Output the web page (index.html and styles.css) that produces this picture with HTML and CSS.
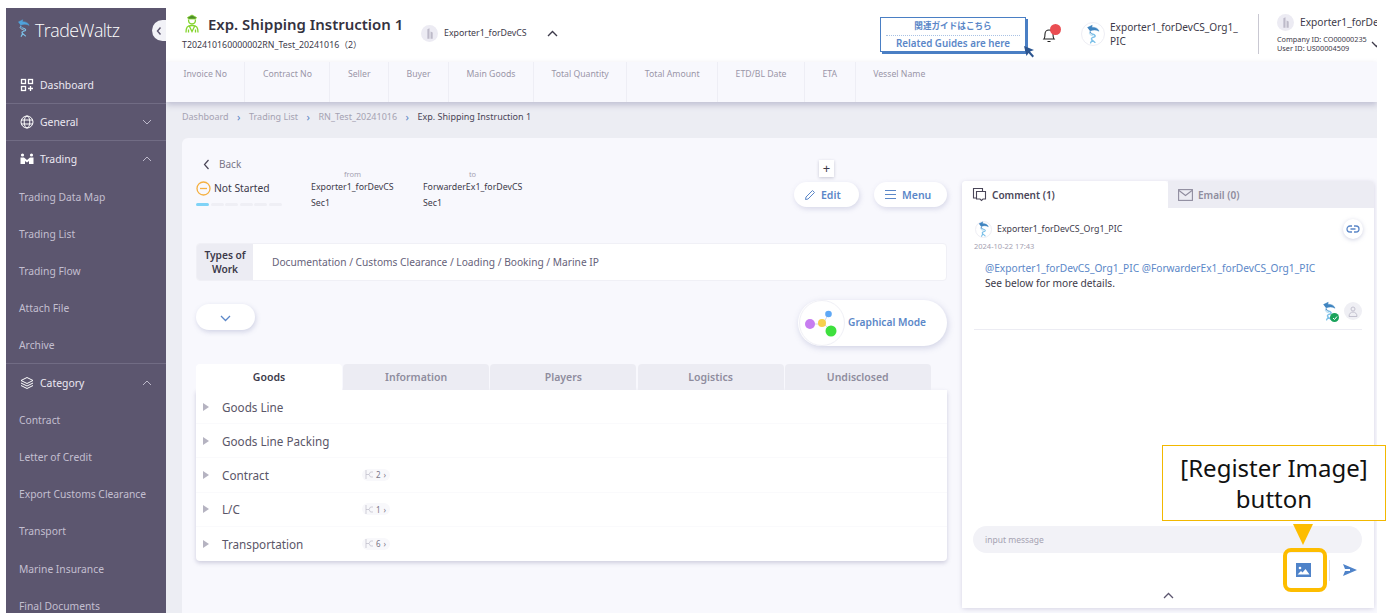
FILE: index.html
```html
<!DOCTYPE html>
<html lang="en">
<head>
    <meta charset="UTF-8">
    <title>Exp. Shipping Instruction 1</title>
    <link rel="stylesheet" href="styles.css">
</head>
<body>

    <svg class="defs" width="0" height="0">
        <symbol id="swirl" viewBox="0 0 20 24">
            <path d="M3 4 9 1 8.500 3.500C13 3.500 16.500 5 17.500 8.500 14 6.500 10 6.500 7 8 5 9.500 6 11 9 12" fill="currentColor" stroke="currentColor" stroke-width=".6" stroke-linejoin="round"/>
            <path d="M9 12C13 13 14 15 11 16 8 17 7 18 9 19.500L12.500 22.500M9 19.500 7 23" fill="none" stroke="#7cc0e8" stroke-width="1.700" stroke-linecap="round"/>
            <path d="M6 10C4 13 9 13.500 10.500 15" fill="none" stroke="#a6d6f0" stroke-width="1.200"/>
        </symbol>
        <symbol id="office" viewBox="0 0 16 16">
            <circle cx="8" cy="8" r="8" fill="#ecebf3"/>
            <path d="M6 13V4l2-1v10zM9 13V6l2 1v6z" fill="#bdbac9"/>
        </symbol>
        <symbol id="branch" viewBox="0 0 8 9">
            <path d="M1 0v9M1 4.500h3l1.500-2.500H8M4 4.500l1.500 2.500H8" fill="none" stroke="#bdbbc8" stroke-width=".7"/>
        </symbol>
    </svg>

    <div class="app">
        <nav class="sidebar">
            <div class="logo">
                <svg class="logo-mark" width="15" height="20"><use href="#swirl"/></svg>
                <span>TradeWaltz</span>
                <div class="collapse-btn">
                    <svg width="8" height="10" viewBox="0 0 8 10"><path d="M5.500 1.500 2.500 5l3 3.500" fill="none" stroke="#5c566f" stroke-width="1.400"/></svg>
                </div>
            </div>

            <div class="nav-head">
                <svg width="14" height="14" viewBox="0 0 14 14" fill="none" stroke="#fff" stroke-width="1.300"><rect x="1.500" y="1.500" width="4" height="4"/><rect x="8.500" y="1.500" width="4" height="4"/><rect x="1.500" y="8.500" width="4" height="4"/><path d="M10.500 8v5M8 10.500h5"/></svg>
                <span>Dashboard</span>
            </div>
            <div class="nav-head">
                <svg width="14" height="14" viewBox="0 0 14 14" fill="none" stroke="#fff" stroke-width="1"><circle cx="7" cy="7" r="6"/><ellipse cx="7" cy="7" rx="2.800" ry="6"/><path d="M1 5h12M1 9h12"/></svg>
                <span>General</span>
                <svg class="caret" width="10" height="6" viewBox="0 0 10 6"><path d="M1 1l4 4 4-4" fill="none" stroke="#bdb9cb" stroke-width="1"/></svg>
            </div>
            <div class="nav-head open">
                <svg width="14" height="14" viewBox="0 0 14 14" fill="#fff"><circle cx="2.500" cy="3" r="1.600"/><circle cx="11.500" cy="3" r="1.600"/><path d="M.5 5.500H4l3 2.500 3-2.500h3.500V12H9V9L7 10.500 5 9v3H.5z"/></svg>
                <span>Trading</span>
                <svg class="caret" width="10" height="6" viewBox="0 0 10 6"><path d="M1 5l4-4 4 4" fill="none" stroke="#bdb9cb" stroke-width="1"/></svg>
            </div>
            <a class="nav-sub">Trading Data Map</a>
            <a class="nav-sub">Trading List</a>
            <a class="nav-sub">Trading Flow</a>
            <a class="nav-sub">Attach File</a>
            <a class="nav-sub last">Archive</a>
            <div class="nav-head open">
                <svg width="14" height="14" viewBox="0 0 14 14" fill="none" stroke="#fff" stroke-width="1"><path d="M7 1.500 13 4.500 7 7.500 1 4.500zM1 7l6 3 6-3M1 9.500l6 3 6-3"/></svg>
                <span>Category</span>
                <svg class="caret" width="10" height="6" viewBox="0 0 10 6"><path d="M1 5l4-4 4 4" fill="none" stroke="#bdb9cb" stroke-width="1"/></svg>
            </div>
            <a class="nav-sub">Contract</a>
            <a class="nav-sub">Letter of Credit</a>
            <a class="nav-sub">Export Customs Clearance</a>
            <a class="nav-sub">Transport</a>
            <a class="nav-sub">Marine Insurance</a>
            <a class="nav-sub">Final Documents</a>
        </nav>

        <div class="main">
            <header class="topbar">
                <div class="title-block">
                    <div class="title-row">
                        <svg width="14" height="19" viewBox="0 0 14 19" fill="none" stroke="#84d42c" stroke-width="1.300"><path d="M2.500 3.500 7 1l4.500 2.500-1 1.500h-7z" fill="#4f8f2c" stroke="#84d42c" stroke-width=".8"/><path d="M3.500 5.500c0 6 7 6 7 0"/><path d="M1 18.500c0-5 1-7 6-7s6 2 6 7M4 11.500l3 6 3-6M3.500 18.500v-3M10.500 18.500v-3"/></svg>
                        <h1>Exp. Shipping Instruction 1</h1>
                    </div>
                    <div class="trade-id">T202410160000002RN_Test_20241016（2）</div>
                </div>
                <div class="company">
                    <svg width="17" height="17"><use href="#office"/></svg>
                    <span>Exporter1_forDevCS</span>
                    <svg class="company-caret" width="11" height="7" viewBox="0 0 11 7"><path d="M1 6l4.500-4.500L10 6" fill="none" stroke="#3d3a4a" stroke-width="1.400"/></svg>
                </div>
                <div class="guide">
                    <div class="guide-jp">関連ガイドはこちら</div>
                    <div class="guide-en">Related Guides are here</div>
                    <svg class="guide-cursor" width="12" height="13" viewBox="0 0 12 13"><path d="M1 1l10 4-4 1.500 4 4.500-1.500 1.500-4-4.500L3.500 11z" fill="#2c5590"/></svg>
                </div>
                <div class="bell">
                    <svg width="14" height="16" viewBox="0 0 14 16" fill="none" stroke="#222" stroke-width="1.100"><path d="M2 12c1-1 1-3 1-5 0-2.500 1.800-4 4-4s4 1.500 4 4c0 2 0 4 1 5zM5.500 14.500h3"/></svg>
                    <i class="bell-dot"></i>
                </div>
                <div class="me">
                    <div class="avatar-ring">
                        <svg class="avatar" width="16" height="20"><use href="#swirl"/></svg>
                    </div>
                    <div class="me-name">Exporter1_forDevCS_Org1_<br>PIC</div>
                </div>
                <div class="account">
                    <div class="account-name">
                        <svg width="17" height="17"><use href="#office"/></svg>
                        <span>Exporter1_forDevCS</span>
                    </div>
                    <div class="account-id">Company ID: CO00000235</div>
                    <div class="account-id">User ID: US00004509</div>
                    <svg class="account-caret" width="11" height="7" viewBox="0 0 11 7"><path d="M1 1l4.500 4.500L10 1" fill="none" stroke="#3d3a4a" stroke-width="1.300"/></svg>
                </div>
            </header>

            <div class="summary">
                <div class="summary-cell">Invoice No</div>
                <div class="summary-cell">Contract No</div>
                <div class="summary-cell">Seller</div>
                <div class="summary-cell">Buyer</div>
                <div class="summary-cell">Main Goods</div>
                <div class="summary-cell">Total Quantity</div>
                <div class="summary-cell">Total Amount</div>
                <div class="summary-cell">ETD/BL Date</div>
                <div class="summary-cell">ETA</div>
                <div class="summary-cell">Vessel Name</div>
            </div>

            <div class="content">
                <div class="crumbs">
                    <span>Dashboard</span><b>›</b>
                    <span>Trading List</span><b>›</b>
                    <span>RN_Test_20241016</span><b>›</b>
                    <span class="here">Exp. Shipping Instruction 1</span>
                </div>

                <div class="card">
                    <section class="work">
                        <div class="work-head">
                            <div class="status-block">
                                <div class="back">
                                    <svg width="7" height="11" viewBox="0 0 7 11"><path d="M5.500 1 1.500 5.500l4 4.500" fill="none" stroke="#4a4658" stroke-width="1.200"/></svg>
                                    <span>Back</span>
                                </div>
                                <div class="status">
                                    <svg width="15" height="15" viewBox="0 0 15 15" fill="none" stroke="#f5b041" stroke-width="1.300"><circle cx="7.500" cy="7.500" r="6.500"/><path d="M4 7.500h7"/></svg>
                                    <span>Not Started</span>
                                </div>
                                <div class="progress">
                                    <i class="done"></i><i></i><i></i><i></i><i></i><i></i>
                                </div>
                            </div>
                            <div class="party from">
                                <small>from</small>
                                <div>Exporter1_forDevCS</div>
                                <div>Sec1</div>
                            </div>
                            <div class="party to">
                                <small>to</small>
                                <div>ForwarderEx1_forDevCS</div>
                                <div>Sec1</div>
                            </div>
                            <div class="actions">
                                <div class="plus">+</div>
                                <button class="pill edit">
                                    <svg width="12" height="12" viewBox="0 0 12 12" fill="none" stroke="#5b87c8" stroke-width="1"><path d="M1.500 10.500 2 8 8.500 1.500l2 2L4 10z"/></svg>
                                    Edit
                                </button>
                                <button class="pill menu">
                                    <svg width="13" height="11" viewBox="0 0 13 11" stroke="#5b87c8" stroke-width="1.100"><path d="M1 1.500h11M1 5.500h11M1 9.500h11"/></svg>
                                    Menu
                                </button>
                            </div>
                        </div>

                        <div class="types">
                            <div class="types-label">Types of Work</div>
                            <div class="types-value">Documentation / Customs Clearance / Loading / Booking / Marine IP</div>
                        </div>

                        <div class="mode-row">
                            <button class="expand">
                                <svg width="11" height="7" viewBox="0 0 11 7"><path d="M1 1l4.500 4.500L10 1" fill="none" stroke="#5b87c8" stroke-width="1.300"/></svg>
                            </button>
                            <button class="graph-btn">
                                <span class="graph-icon">
                                    <svg width="44" height="44" viewBox="0 0 44 44">
                                        <path d="M10 23h13l6-11M23 22l8 8" stroke="#d8d8e4" stroke-width="1" fill="none"/>
                                        <circle cx="10" cy="23" r="5" fill="#c77df0"/>
                                        <circle cx="22" cy="22" r="4" fill="#f7d04e"/>
                                        <circle cx="28.500" cy="13" r="3.300" fill="#5fa8f5"/>
                                        <circle cx="31" cy="30" r="5.500" fill="#3ee03e"/>
                                    </svg>
                                </span>
                                Graphical Mode
                            </button>
                        </div>

                        <div class="tabs">
                            <div class="tab active">Goods</div>
                            <div class="tab">Information</div>
                            <div class="tab">Players</div>
                            <div class="tab">Logistics</div>
                            <div class="tab">Undisclosed</div>
                        </div>
                        <div class="tree">
                            <div class="tree-row"><i class="arrow"></i><span class="tree-name">Goods Line</span></div>
                            <div class="tree-row"><i class="arrow"></i><span class="tree-name">Goods Line Packing</span></div>
                            <div class="tree-row"><i class="arrow"></i><span class="tree-name">Contract</span><span class="count"><svg width="8" height="9"><use href="#branch"/></svg>2<u>›</u></span></div>
                            <div class="tree-row"><i class="arrow"></i><span class="tree-name">L/C</span><span class="count"><svg width="8" height="9"><use href="#branch"/></svg>1<u>›</u></span></div>
                            <div class="tree-row"><i class="arrow"></i><span class="tree-name">Transportation</span><span class="count"><svg width="8" height="9"><use href="#branch"/></svg>6<u>›</u></span></div>
                        </div>
                    </section>

                    <aside class="talk">
                        <div class="talk-tabs">
                            <div class="talk-tab active">
                                <svg width="15" height="15" viewBox="0 0 15 15" fill="none" stroke="#4a4658" stroke-width="1.100"><path d="M4 11H1.500V1.500h9V4"/><path d="M4.500 4.500h9v7.500H11l-1.500 1.500L8 12H4.500z"/></svg>
                                Comment (1)
                            </div>
                            <div class="talk-tab">
                                <svg width="15" height="12" viewBox="0 0 15 12" fill="none" stroke="#8f8c9e" stroke-width="1.100"><rect x=".6" y=".6" width="13.800" height="10.800"/><path d="M1 1.500l6.500 5 6.500-5"/></svg>
                                Email (0)
                            </div>
                        </div>
                        <div class="talk-body">
                            <div class="comment">
                                <div class="comment-head">
                                    <div class="avatar-ring small">
                                        <svg class="avatar" width="13" height="16"><use href="#swirl"/></svg>
                                    </div>
                                    <span>Exporter1_forDevCS_Org1_PIC</span>
                                    <div class="link-btn">
                                        <svg width="14" height="8" viewBox="0 0 14 8" fill="none" stroke="#5b87c8" stroke-width="1.300"><path d="M6 1H4a3 3 0 0 0 0 6h2M8 1h2a3 3 0 0 1 0 6H8M4.500 4h5"/></svg>
                                    </div>
                                </div>
                                <div class="comment-date">2024-10-22 17:43</div>
                                <div class="comment-text">
                                    <span class="mention">@Exporter1_forDevCS_Org1_PIC @ForwarderEx1_forDevCS_Org1_PIC</span><br>
                                    See below for more details.
                                </div>
                                <div class="readers">
                                    <div class="reader">
                                        <svg class="avatar" width="16" height="20"><use href="#swirl"/></svg>
                                        <i class="tick">
                                            <svg width="6" height="6" viewBox="0 0 6 6"><path d="M1 3l1.500 1.500L5 1.500" fill="none" stroke="#fff" stroke-width="1"/></svg>
                                        </i>
                                    </div>
                                    <div class="reader-off">
                                        <svg width="10" height="11" viewBox="0 0 10 11" fill="none" stroke="#c3c1cf" stroke-width="1"><circle cx="5" cy="3" r="2"/><path d="M1 10.500c0-6 8-6 8 0z"/></svg>
                                    </div>
                                </div>
                            </div>
                            <div class="composer">
                                <div class="message">input message</div>
                                <div class="composer-btns">
                                    <svg class="image-btn" width="15" height="14" viewBox="0 0 15 14"><rect width="15" height="14" fill="#4f83c9"/><circle cx="4" cy="5" r="1.300" fill="#fff"/><path d="M1.500 11.500 5 8l1.500 1.500L9.500 6l4 5.500z" fill="#fff"/></svg>
                                    <i class="btn-sep"></i>
                                    <svg width="14" height="12" viewBox="0 0 14 12"><path d="M0 0l14 6-14 6 2-5h5V5H2z" fill="#4f83c9"/></svg>
                                </div>
                                <svg class="fold" width="11" height="7" viewBox="0 0 11 7"><path d="M1 6l4.500-4.500L10 6" fill="none" stroke="#5c566f" stroke-width="1.300"/></svg>
                            </div>
                        </div>
                    </aside>
                </div>
            </div>
        </div>
    </div>

    <div class="note">[Register Image]<br>button</div>
    <div class="note-arrow"></div>
    <div class="note-ring"></div>

</body>
</html>
```

FILE: styles.css
```css
* {
    box-sizing: border-box;
}

body {
    margin: 0;
    width: 1390px;
    height: 616px;
    padding: 8px 13px 0 6px;
    overflow: hidden;
    position: relative;
    background: #fff;
    font-family: "Noto Sans", "Noto Sans CJK JP", sans-serif;
    color: #3d3a4a;
}

.defs {
    position: absolute;
}

.app {
    display: flex;
    height: 605px;
}

/* sidebar */
.sidebar {
    width: 160px;
    flex: none;
    background: #5c566f;
    color: #ece9f2;
    overflow: hidden;
}

.logo {
    height: 58.500px;
    display: flex;
    align-items: flex-start;
    padding: 10px 0 0 10px;
    position: relative;
    font-family: "Open Sans", sans-serif;
    font-weight: 300;
    font-size: 17.800px;
    line-height: 25px;
    letter-spacing: -0.5px;
    color: #fff;
    gap: 4px;
}

.logo-mark {
    color: #4fa3dc;
    flex: none;
}

.collapse-btn {
    position: absolute;
    right: 0;
    top: 12px;
    width: 14px;
    height: 21px;
    background: #f2f2f7;
    border-radius: 11px 0 0 11px;
    display: flex;
    align-items: center;
    justify-content: center;
}

.nav-head {
    height: 37.200px;
    display: flex;
    align-items: center;
    padding: 0 14px;
    font-size: 10.400px;
    border-bottom: 1px solid #716c84;
    gap: 6px;
}

.nav-head.open {
    border-bottom: 0;
}

.caret {
    margin-left: auto;
}

.nav-sub {
    height: 37.200px;
    display: flex;
    align-items: center;
    padding-left: 13px;
    font-size: 10.300px;
    color: #c3bfd0;
}

.nav-sub.last {
    border-bottom: 1px solid #716c84;
}

/* top */
.main {
    flex: 1;
    min-width: 0;
    display: flex;
    flex-direction: column;
    overflow: hidden;
}

.topbar {
    height: 54px;
    flex: none;
    background: #fff;
    display: flex;
    align-items: center;
    padding-left: 16px;
    position: relative;
}

.title-block {
    width: 239px;
    flex: none;
    margin-top: -6px;
}

.title-row {
    display: flex;
    align-items: center;
    gap: 9px;
    padding-left: 3px;
}

.title-row h1 {
    margin: 0;
    font-size: 14.950px;
    font-weight: 600;
    line-height: 20px;
    color: #35323f;
    white-space: nowrap;
}

.trade-id {
    font-size: 8.800px;
    margin-top: 4px;
    white-space: nowrap;
}

.company {
    display: flex;
    align-items: center;
    font-size: 8.800px;
    width: 459px;
    flex: none;
    margin-top: -4px;
    gap: 6px;
}

.company-caret {
    margin-left: 14px;
}

.guide {
    width: 146px;
    height: 35px;
    flex: none;
    margin-top: -2px;
    border: 1.500px solid #4a7fc4;
    box-shadow: 2px 2px 0 #4a7fc4;
    text-align: center;
    font-size: 9.800px;
    font-weight: 600;
    color: #5b87c8;
    position: relative;
}

.guide-jp {
    font-size: 8.600px;
    line-height: 17px;
    border-bottom: 1px dotted #a9c2e4;
    margin: 0 5px;
}

.guide-en {
    line-height: 16px;
}

.guide-cursor {
    position: absolute;
    right: -10px;
    bottom: -7px;
}

.bell {
    position: relative;
    width: 14px;
    margin-left: 16px;
    height: 16px;
    margin-top: -2px;
    flex: none;
}

.bell-dot {
    position: absolute;
    left: 8px;
    top: -2px;
    width: 11px;
    height: 11px;
    border-radius: 50%;
    background: #ea4d52;
}

.me {
    display: flex;
    align-items: center;
    margin-left: 25px;
    width: 177px;
    flex: none;
    font-size: 10.100px;
    line-height: 14px;
    gap: 5px;
    margin-top: -2px;
}

.avatar-ring {
    width: 24px;
    height: 24px;
    border-radius: 50%;
    border: 1px solid #eeeef4;
    display: flex;
    align-items: center;
    justify-content: center;
    flex: none;
}

.avatar-ring.small {
    width: 17px;
    height: 17px;
}

.avatar {
    color: #3f84c0;
    flex: none;
}

.account {
    border-left: 1px solid #c9c8d2;
    height: 40px;
    padding-left: 18px;
    flex: none;
    width: 240px;
    margin-top: -3px;
    position: relative;
    white-space: nowrap;
}

.account-name {
    display: flex;
    align-items: center;
    gap: 6px;
    font-size: 10.200px;
    height: 17px;
    margin-bottom: 4px;
}

.account-id {
    font-size: 7.300px;
    line-height: 9.500px;
}

.account-caret {
    position: absolute;
    left: 112px;
    top: 27px;
}

.summary {
    height: 40px;
    flex: none;
    background: #f8f8fd;
    display: flex;
    box-shadow: 0 3px 6px rgba(110, 105, 150, 0.35);
    position: relative;
}

.summary-cell {
    padding: 6px 17.500px 0;
    font-size: 8.700px;
    color: #9a96a8;
    border-right: 1px solid #eeeef5;
    white-space: nowrap;
}

.summary-cell:last-child {
    border-right: 0;
}

/* content */
.content {
    flex: 1;
    min-height: 0;
    background: #ecedf3;
    padding: 8px 0 0 16px;
}

.crumbs {
    font-size: 9px;
    color: #a5a2b2;
    display: flex;
    gap: 8.500px;
    height: 14px;
    line-height: 14px;
}

.crumbs b {
    color: #5b87c8;
    font-size: 11px;
    font-weight: 400;
}

.crumbs .here {
    color: #4a4658;
}

.card {
    margin-top: 14px;
    height: 480px;
    background: #f8f8fd;
    border-radius: 6px 0 0 0;
    display: flex;
    padding: 18px 0 0 14px;
}

.work {
    width: 751px;
    flex: none;
}

.work-head {
    display: flex;
    height: 87px;
    position: relative;
}

.status-block {
    width: 115px;
    flex: none;
}

.back {
    display: flex;
    align-items: center;
    gap: 9px;
    font-size: 10px;
    color: #7a7688;
    padding-left: 7px;
    height: 16px;
}

.status {
    display: flex;
    align-items: center;
    gap: 3px;
    font-size: 10.300px;
    margin-top: 8px;
    height: 16px;
}

.progress {
    display: flex;
    gap: 1.500px;
    margin-top: 7px;
    width: 86px;
}

.progress i {
    flex: 1;
    height: 3px;
    background: #efeff5;
    border-radius: 2px;
}

.progress i.done {
    background: #7fd3f7;
}

.party {
    font-size: 8.800px;
    line-height: 16px;
    padding-top: 14px;
    flex: none;
    white-space: nowrap;
}

.party small {
    display: block;
    font-size: 7.500px;
    line-height: 9px;
    color: #a5a2b2;
    text-align: center;
}

.party.from {
    width: 83px;
    margin-right: 29px;
}

.party.to {
    width: 99px;
}

.actions {
    margin-left: auto;
    display: flex;
    gap: 15px;
    align-items: flex-start;
    padding-top: 26px;
    position: relative;
}

.plus {
    position: absolute;
    left: 25px;
    top: 4px;
    width: 15px;
    height: 17px;
    background: #fff;
    text-align: center;
    font-size: 13px;
    line-height: 16px;
    box-shadow: 0 1px 3px rgba(90, 90, 120, 0.3);
}

.pill {
    height: 25px;
    border: 0;
    border-radius: 13px;
    background: #fff;
    box-shadow: 1px 2px 5px rgba(120, 125, 175, 0.25);
    padding: 0 0 0 10px;
    display: flex;
    align-items: center;
    gap: 5px;
    font-family: inherit;
    font-size: 10.500px;
    font-weight: 600;
    color: #5b87c8;
}

.pill.edit {
    width: 65px;
}

.pill.menu {
    width: 73px;
}

.types {
    display: flex;
    height: 38px;
    border-radius: 4px;
    background: #fff;
    overflow: hidden;
    border: 1px solid #f0f0f6;
}

.types-label {
    width: 56px;
    background: #ececf3;
    font-size: 10.200px;
    font-weight: 600;
    line-height: 14px;
    text-align: center;
    display: flex;
    align-items: center;
    justify-content: center;
}

.types-value {
    padding-left: 19px;
    font-size: 10.200px;
    color: #66627a;
    line-height: 36px;
}

.mode-row {
    display: flex;
    justify-content: space-between;
    margin-top: 19px;
    height: 64px;
}

.expand {
    margin-top: 4px;
    width: 59px;
    height: 26px;
    border: 0;
    border-radius: 13px;
    background: #fff;
    box-shadow: 1px 2px 5px rgba(120, 125, 175, 0.3);
}

.graph-btn {
    width: 149px;
    height: 46px;
    border: 0;
    border-radius: 23px;
    background: #fff;
    box-shadow: 1px 2px 6px rgba(120, 125, 175, 0.3);
    display: flex;
    align-items: center;
    padding: 0 0 3px 1px;
    gap: 3px;
    font-family: inherit;
    font-size: 10.200px;
    font-weight: 600;
    color: #5b87c8;
}

.graph-icon {
    display: flex;
    border-radius: 50%;
    border: 1px solid #f0f0f6;
    margin-top: 3px;
}

.tabs {
    display: flex;
    gap: 1px;
    height: 26px;
}

.tab {
    width: 146px;
    margin-right: .2px;
    background: #ececf3;
    border-radius: 4px 4px 0 0;
    text-align: center;
    font-size: 10.500px;
    font-weight: 600;
    line-height: 27px;
    color: #8f8c9e;
}

.tab.active {
    background: #fff;
    color: #3d3a4a;
}

.tree {
    background: #fff;
    height: 171px;
    border-radius: 0 0 4px 4px;
    box-shadow: 0 2px 4px rgba(110, 105, 150, 0.3);
}

.tree-row {
    height: 34.200px;
    display: flex;
    align-items: center;
    padding-left: 7px;
    border-bottom: 1px solid #fafafc;
}

.tree-row:last-child {
    border-bottom: 0;
}

.arrow {
    width: 0;
    height: 0;
    border-left: 6px solid #b5b3c1;
    border-top: 4px solid transparent;
    border-bottom: 4px solid transparent;
    margin-right: 13px;
    flex: none;
}

.tree-name {
    width: 140px;
    font-size: 11.700px;
    line-height: 16px;
    color: #5a5668;
}

.count {
    display: flex;
    align-items: center;
    gap: 3px;
    height: 12px;
    width: 28px;
    padding-left: 3px;
    background: #f8f8fb;
    border-radius: 6px;
    font-size: 8px;
    color: #7a7688;
}

.count u {
    text-decoration: none;
}

/* comment panel */
.talk {
    margin-left: 15px;
    margin-top: 25px;
    width: 412px;
    height: 427px;
    flex: none;
    display: flex;
    flex-direction: column;
    box-shadow: 0 1px 4px rgba(110, 105, 150, 0.25);
    border-radius: 4px;
}

.talk-tabs {
    display: flex;
    height: 27px;
    flex: none;
}

.talk-tab {
    flex: 1;
    display: flex;
    align-items: center;
    gap: 5px;
    padding-left: 10px;
    font-size: 10px;
    font-weight: 600;
    color: #8f8c9e;
    background: #ececf3;
    border-radius: 0 4px 0 0;
}

.talk-tab.active {
    background: #fff;
    color: #4a4658;
    border-radius: 4px 4px 0 0;
}

.talk-body {
    flex: 1;
    background: #fff;
    display: flex;
    flex-direction: column;
    padding: 0 12px;
}

.comment {
    height: 122px;
    border-bottom: 1px solid #ececf3;
    flex: none;
}

.comment-head {
    display: flex;
    align-items: center;
    height: 22px;
    margin-top: 10px;
    font-size: 8.800px;
    gap: 5px;
    padding-left: 1px;
}

.link-btn {
    margin-left: auto;
    margin-right: -1px;
    width: 20px;
    height: 20px;
    border-radius: 50%;
    background: #fff;
    box-shadow: 0 1px 4px rgba(120, 125, 175, 0.35);
    display: flex;
    align-items: center;
    justify-content: center;
}

.comment-date {
    font-size: 7.500px;
    color: #a5a2b2;
    line-height: 11px;
    margin-top: 1px;
}

.comment-text {
    margin-top: 9px;
    padding-left: 11px;
    font-size: 10.200px;
    line-height: 15px;
}

.mention {
    color: #5b87c8;
}

.readers {
    display: flex;
    justify-content: flex-end;
    align-items: center;
    gap: 6px;
    margin-top: 10px;
}

.reader {
    position: relative;
    width: 18px;
    height: 20px;
    text-align: center;
}

.tick {
    position: absolute;
    right: -1px;
    bottom: -1px;
    width: 9px;
    height: 9px;
    border-radius: 50%;
    background: #1aa35c;
    display: flex;
    align-items: center;
    justify-content: center;
}

.reader-off {
    width: 18px;
    height: 18px;
    border-radius: 50%;
    background: #efeff4;
    display: flex;
    align-items: center;
    justify-content: center;
}

.composer {
    margin-top: auto;
    margin-bottom: 9px;
}

.message {
    height: 27px;
    margin-left: -1px;
    border-radius: 14px;
    background: #f2f2f7;
    font-size: 8.500px;
    line-height: 27px;
    padding-left: 12px;
    color: #a5a2b2;
}

.composer-btns {
    display: flex;
    align-items: center;
    justify-content: flex-end;
    height: 22px;
    margin-top: 6px;
    gap: 13px;
    padding-right: 5px;
}

.image-btn {
    margin-right: 5px;
}

.btn-sep {
    width: 1px;
    height: 21px;
    background: #dcdce6;
}

.fold {
    display: block;
    margin: 11px auto 0;
}

/* annotation laid over the screenshot */
.note {
    position: absolute;
    left: 1162px;
    top: 445px;
    width: 224px;
    height: 76px;
    border: 1px solid #f2b800;
    background: #fff;
    text-align: center;
    font-size: 24px;
    line-height: 31px;
    padding-top: 6px;
    color: #111;
    white-space: nowrap;
}

.note-arrow {
    position: absolute;
    left: 1293px;
    top: 524px;
    width: 0;
    height: 0;
    border-left: 10.500px solid transparent;
    border-right: 10.500px solid transparent;
    border-top: 21px solid #fdbd00;
}

.note-ring {
    position: absolute;
    left: 1283px;
    top: 548px;
    width: 44px;
    height: 44px;
    border: 4px solid #fdbd00;
    border-radius: 8px;
}
```
